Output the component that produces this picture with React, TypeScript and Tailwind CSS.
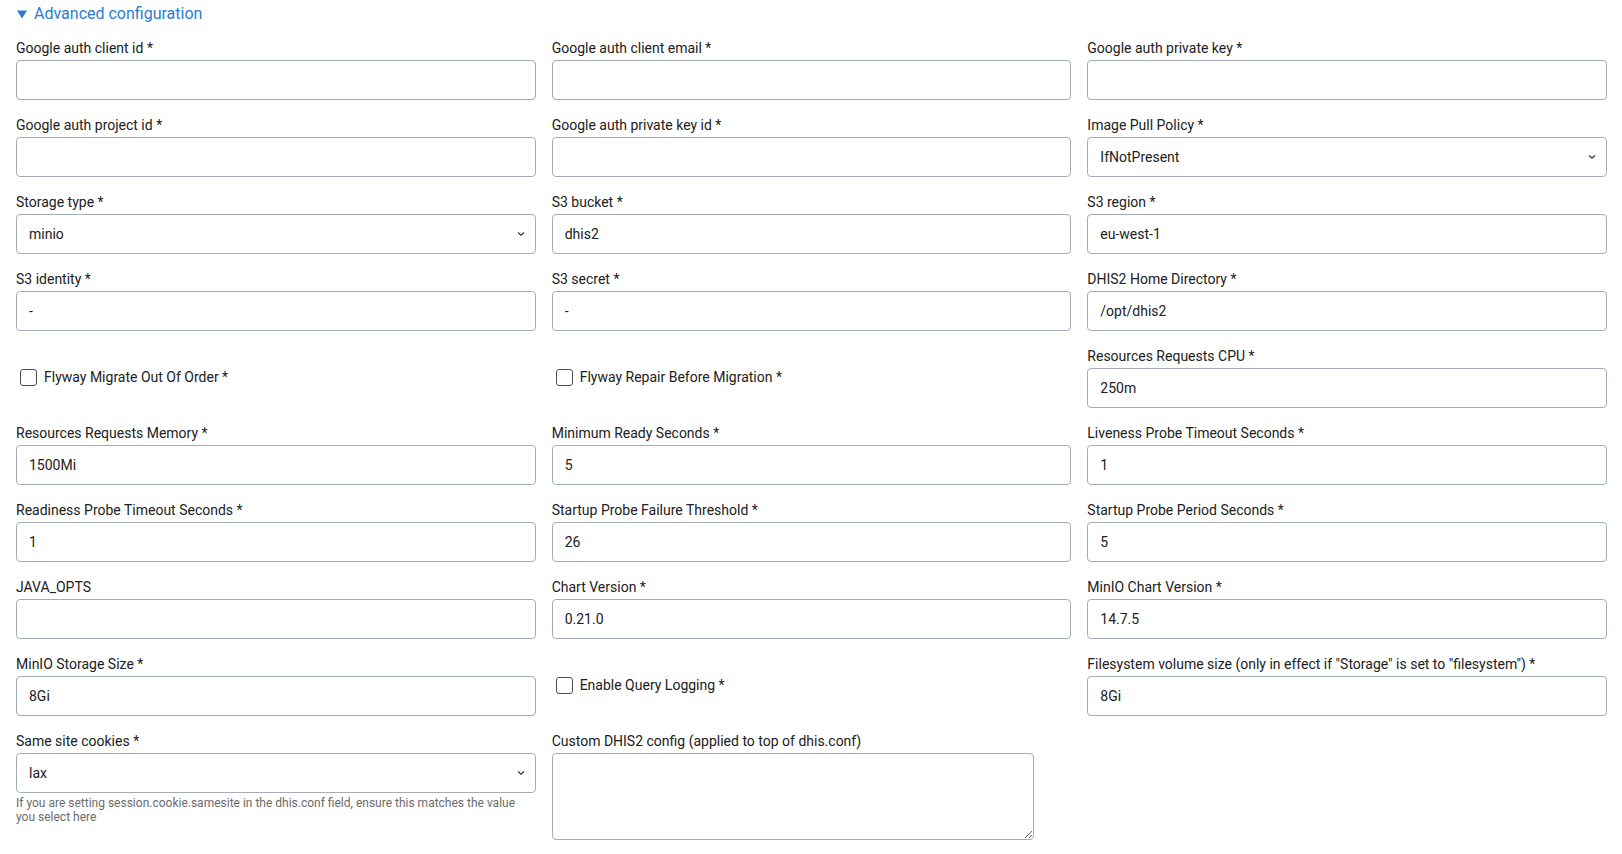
import React from 'react';

type Field =
  | { kind: 'text'; label: string; value?: string }
  | { kind: 'select'; label: string; value: string; help?: string }
  | { kind: 'check'; label: string }
  | { kind: 'area'; label: string }
  | { kind: 'blank' };

const fields: Field[] = [
  { kind: 'text', label: 'Google auth client id *' },
  { kind: 'text', label: 'Google auth client email *' },
  { kind: 'text', label: 'Google auth private key *' },
  { kind: 'text', label: 'Google auth project id *' },
  { kind: 'text', label: 'Google auth private key id *' },
  { kind: 'select', label: 'Image Pull Policy *', value: 'IfNotPresent' },
  { kind: 'select', label: 'Storage type *', value: 'minio' },
  { kind: 'text', label: 'S3 bucket *', value: 'dhis2' },
  { kind: 'text', label: 'S3 region *', value: 'eu-west-1' },
  { kind: 'text', label: 'S3 identity *', value: '-' },
  { kind: 'text', label: 'S3 secret *', value: '-' },
  { kind: 'text', label: 'DHIS2 Home Directory *', value: '/opt/dhis2' },
  { kind: 'check', label: 'Flyway Migrate Out Of Order *' },
  { kind: 'check', label: 'Flyway Repair Before Migration *' },
  { kind: 'text', label: 'Resources Requests CPU *', value: '250m' },
  { kind: 'text', label: 'Resources Requests Memory *', value: '1500Mi' },
  { kind: 'text', label: 'Minimum Ready Seconds *', value: '5' },
  { kind: 'text', label: 'Liveness Probe Timeout Seconds *', value: '1' },
  { kind: 'text', label: 'Readiness Probe Timeout Seconds *', value: '1' },
  { kind: 'text', label: 'Startup Probe Failure Threshold *', value: '26' },
  { kind: 'text', label: 'Startup Probe Period Seconds *', value: '5' },
  { kind: 'text', label: 'JAVA_OPTS' },
  { kind: 'text', label: 'Chart Version *', value: '0.21.0' },
  { kind: 'text', label: 'MinIO Chart Version *', value: '14.7.5' },
  { kind: 'text', label: 'MinIO Storage Size *', value: '8Gi' },
  { kind: 'check', label: 'Enable Query Logging *' },
  { kind: 'text', label: 'Filesystem volume size (only in effect if "Storage" is set to "filesystem") *', value: '8Gi' },
  {
    kind: 'select',
    label: 'Same site cookies *',
    value: 'lax',
    help: 'If you are setting session.cookie.samesite in the dhis.conf field, ensure this matches the value you select here',
  },
  { kind: 'area', label: 'Custom DHIS2 config (applied to top of dhis.conf)' },
  { kind: 'blank' },
];

const boxClass =
  'w-full h-10 px-3 border border-[#a3adb9] rounded-[4px] bg-white text-[14px] text-[#212121] outline-none';

const FieldCell = ({ field }: { field: Field }) => {
  if (field.kind === 'blank') return <div />;

  if (field.kind === 'check') {
    return (
      <label className="flex items-center gap-[7px] pl-[4px] text-[14px] leading-5 text-[#212121]">
        <input
          type="checkbox"
          className="appearance-none w-[17px] h-[17px] border border-[#4a4f55] rounded-[3px] bg-white"
        />
        {field.label}
      </label>
    );
  }

  return (
    <div className="flex flex-col">
      <label className="text-[14px] leading-5 text-[#212121] mb-[2px]">{field.label}</label>
      {field.kind === 'text' && (
        <input type="text" defaultValue={field.value ?? ''} className={boxClass} />
      )}
      {field.kind === 'select' && (
        <>
          <div className="relative">
            <select defaultValue={field.value} className={`${boxClass} appearance-none`}>
              <option value={field.value}>{field.value}</option>
            </select>
            <svg
              className="absolute right-[10px] top-[16px] pointer-events-none"
              width="10"
              height="8"
              viewBox="0 0 10 8"
              fill="none"
            >
              <path d="M2 2.5L5 5.3L8 2.5" stroke="#333" strokeWidth="1.2" />
            </svg>
          </div>
          {field.help && (
            <p className="mt-[3px] text-[12px] leading-[14px] text-[#6b6b6b] pr-4">{field.help}</p>
          )}
        </>
      )}
      {field.kind === 'area' && (
        <textarea className="w-[482px] h-[87px] border border-[#a3adb9] rounded-[4px] bg-white outline-none" />
      )}
    </div>
  );
};

export default function App() {
  return (
    <div
      className="min-h-screen bg-white pl-4 pr-[15px] pt-[2px]"
      style={{ fontFamily: 'Roboto, "Liberation Sans", sans-serif' }}
    >
      <div className="flex items-center gap-[7px] leading-6 text-[16px] text-[#2b7bd0] mb-[12px]">
        <svg width="10" height="9" viewBox="0 0 10 9" className="ml-[1px]">
          <path d="M0 0.5H10L5 8.5Z" fill="#2b7bd0" />
        </svg>
        <span>Advanced configuration</span>
      </div>
      <div className="grid grid-cols-3 gap-x-4 gap-y-[15px]">
        {fields.map((f, i) => (
          <FieldCell key={i} field={f} />
        ))}
      </div>
    </div>
  );
}
